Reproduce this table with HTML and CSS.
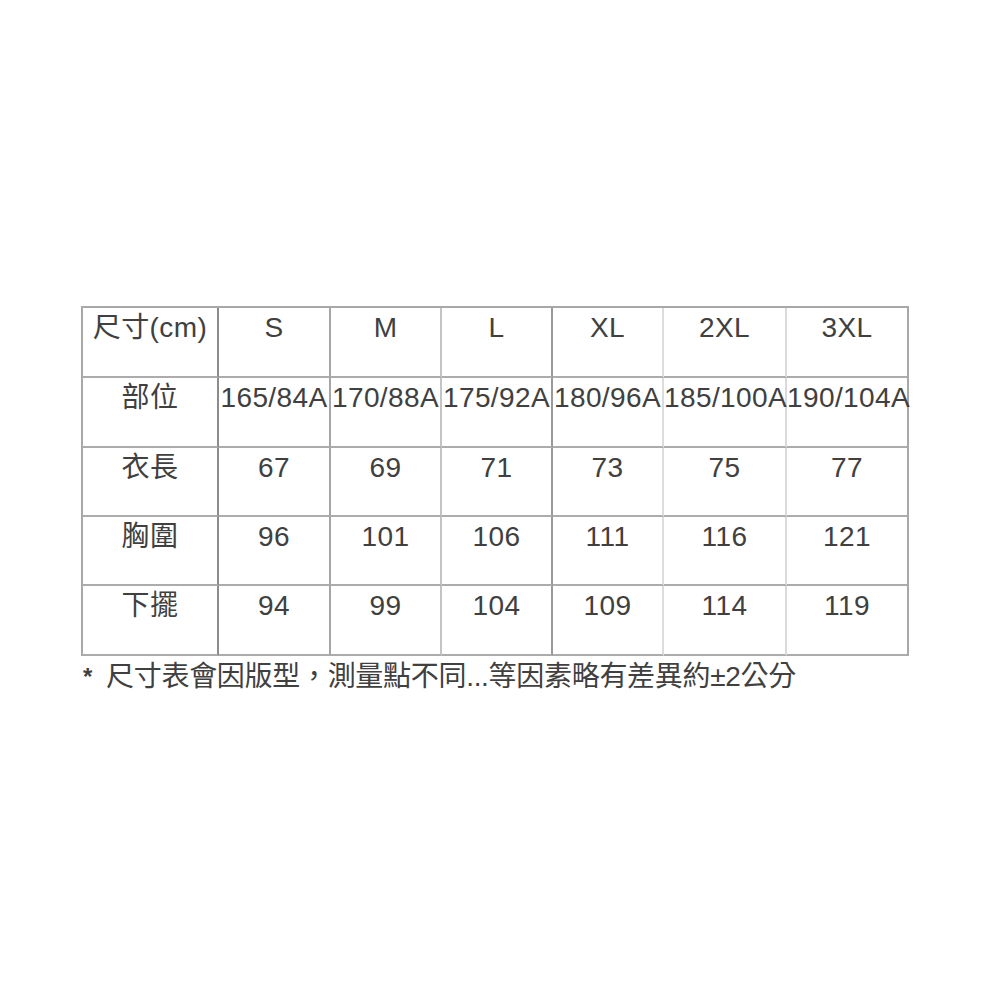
FILE: index.html
```html
<!DOCTYPE html>
<html lang="zh-Hant">
<head>
<meta charset="utf-8">
<title>尺寸表</title>
<link rel="stylesheet" href="styles.css">
</head>
<body>
<div class="page">
  <div class="size-table">
    <div class="cell c1">尺寸(cm)</div>
    <div class="cell c2">S</div>
    <div class="cell c3">M</div>
    <div class="cell c4">L</div>
    <div class="cell c5">XL</div>
    <div class="cell c6">2XL</div>
    <div class="cell c7">3XL</div>

    <div class="cell c1 r2">部位</div>
    <div class="cell c2 r2">165/84A</div>
    <div class="cell c3 r2">170/88A</div>
    <div class="cell c4 r2">175/92A</div>
    <div class="cell c5 r2">180/96A</div>
    <div class="cell c6 r2">185/100A</div>
    <div class="cell c7 r2">190/104A</div>

    <div class="cell c1 r3">衣長</div>
    <div class="cell c2 r3">67</div>
    <div class="cell c3 r3">69</div>
    <div class="cell c4 r3">71</div>
    <div class="cell c5 r3">73</div>
    <div class="cell c6 r3">75</div>
    <div class="cell c7 r3">77</div>

    <div class="cell c1 r4">胸圍</div>
    <div class="cell c2 r4">96</div>
    <div class="cell c3 r4">101</div>
    <div class="cell c4 r4">106</div>
    <div class="cell c5 r4">111</div>
    <div class="cell c6 r4">116</div>
    <div class="cell c7 r4">121</div>

    <div class="cell c1 r5">下擺</div>
    <div class="cell c2 r5">94</div>
    <div class="cell c3 r5">99</div>
    <div class="cell c4 r5">104</div>
    <div class="cell c5 r5">109</div>
    <div class="cell c6 r5">114</div>
    <div class="cell c7 r5">119</div>
  </div>
  <p class="note"><span class="star">*</span>尺寸表會因版型，測量點不同...等因素略有差異約±2公分</p>
</div>
</body>
</html>
```
FILE: styles.css
```css
html, body {
  margin: 0;
  padding: 0;
  background: #ffffff;
}

.page {
  padding: 306px 0 0 81px;
  font-family: "Liberation Sans", "Noto Sans CJK TC", sans-serif;
  color: #404040;
}

.size-table {
  display: grid;
  grid-template-columns: 136px 112px 111px 111px 111px 123px 122px;
  grid-template-rows: 70px 70px 69px 69px 70px;
  width: max-content;
  border-top: 2px solid #a8a8a8;
  border-left: 2px solid #a8a8a8;
}

.cell {
  box-sizing: border-box;
  min-width: 0;
  padding-top: 3px;
  font-size: 28px;
  line-height: 34px;
  letter-spacing: 0.4px;
  text-align: center;
  white-space: nowrap;
  border-right: 2px solid #cccccc;
  border-bottom: 2px solid #acacac;
}

.c1 { border-right-color: #8c8c8c; }
.c2 { border-right-color: #a6a6a6; }
.c3 { border-right-color: #c4c4c4; }
.c4 { border-right-color: #9a9a9a; }
.c5 { border-right-color: #dcdcdc; }
.c6 { border-right-color: #dadada; }
.c7 { border-right-color: #a8a8a8; }

.note {
  margin: 0;
  padding: 4px 0 0 2px;
  font-size: 28px;
  line-height: 34px;
  letter-spacing: -0.3px;
  color: #404040;
  white-space: nowrap;
}

.star {
  display: inline-block;
  font-size: 24px;
  font-weight: bold;
  margin-right: 14px;
  vertical-align: 1px;
}
```
